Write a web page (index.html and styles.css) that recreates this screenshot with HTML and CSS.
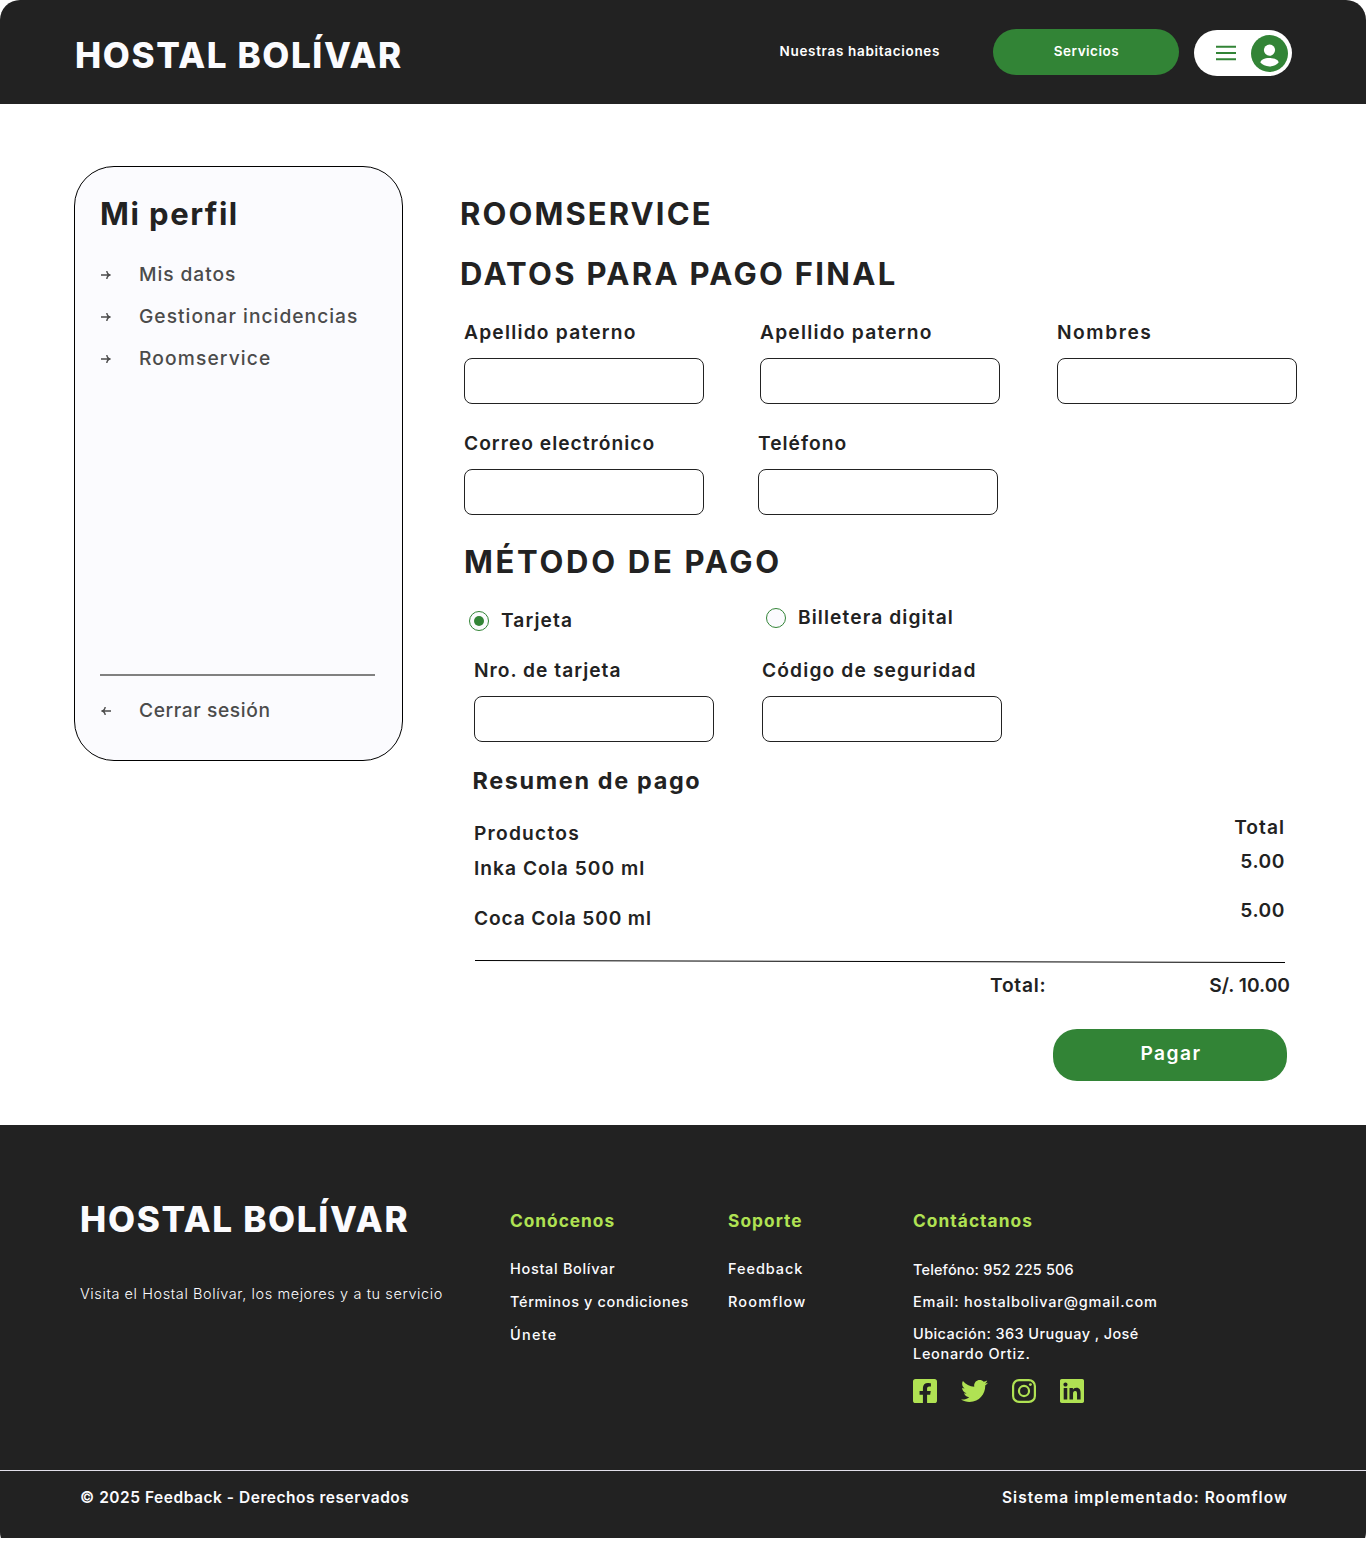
FILE: index.html
```html
<!DOCTYPE html>
<html lang="es">
<head>
<meta charset="utf-8">
<title>Hostal Bolívar - Roomservice</title>
<link rel="stylesheet" href="styles.css">
</head>
<body>
<div class="page">
  <header class="header">
    <div class="logo">HOSTAL BOLÍVAR</div>
    <nav class="nav">
      <a class="nav-link">Nuestras habitaciones</a>
      <a class="nav-button">Servicios</a>
      <div class="account">
        <svg class="menu-icon" width="20" height="16" viewBox="0 0 20 16"><path d="M0 1.7h20M0 8h20M0 14.3h20" stroke="#328436" stroke-width="2"/></svg>
        <svg class="avatar" width="37" height="37" viewBox="0 0 37 37"><circle cx="18.5" cy="18.5" r="18.5" fill="#328436"/><circle cx="18.5" cy="15.1" r="5.6" fill="#fff"/><path d="M9.4 27.6c0-2.800 4-4.700 9.100-4.700s9.100 1.900 9.100 4.700c-2 2.400-5 3.800-9.100 3.800s-7.100-1.400-9.100-3.800z" fill="#fff"/></svg>
      </div>
    </nav>
  </header>

  <main class="main">
    <aside class="sidebar">
      <h2 class="sidebar-title">Mi perfil</h2>
      <ul class="menu">
        <li class="menu-item ls-94"><svg class="arrow" viewBox="0 0 10 10"><path d="M0 5h9M5.800 1c.2 2 1.400 3.700 3.700 4C7.200 5.300 6 7 5.800 9"/></svg>Mis datos</li>
        <li class="menu-item ls-102"><svg class="arrow" viewBox="0 0 10 10"><path d="M0 5h9M5.800 1c.2 2 1.400 3.700 3.700 4C7.200 5.300 6 7 5.800 9"/></svg>Gestionar incidencias</li>
        <li class="menu-item ls-118"><svg class="arrow" viewBox="0 0 10 10"><path d="M0 5h9M5.800 1c.2 2 1.400 3.700 3.700 4C7.200 5.300 6 7 5.800 9"/></svg>Roomservice</li>
      </ul>
      <div class="menu-item logout"><svg class="arrow" viewBox="0 0 10 10"><path d="M10 5H1M4.200 1C4 3 2.800 4.700.5 5c2.300.3 3.500 2 3.700 4"/></svg>Cerrar sesión</div>
    </aside>

    <section class="content">
      <h1 class="title">ROOMSERVICE</h1>
      <h2 class="title title-data">DATOS PARA PAGO FINAL</h2>
      <div class="fields fields-name">
        <label class="field ls-122">Apellido paterno<input class="input"></label>
        <label class="field ls-122">Apellido paterno<input class="input"></label>
        <label class="field ls-150">Nombres<input class="input"></label>
      </div>
      <div class="fields fields-contact">
        <label class="field ls-102">Correo electrónico<input class="input"></label>
        <label class="field ls-102">Teléfono<input class="input"></label>
      </div>
      <h2 class="title title-method">MÉTODO DE PAGO</h2>
      <div class="options">
        <label class="option option-card"><span class="radio radio-on"></span>Tarjeta</label>
        <label class="option"><span class="radio"></span>Billetera digital</label>
      </div>
      <div class="fields fields-card">
        <label class="field ls-102">Nro. de tarjeta<input class="input"></label>
        <label class="field ls-114">Código de seguridad<input class="input"></label>
      </div>
      <h3 class="summary-title">Resumen de pago</h3>
      <div class="summary">
        <div class="products">
          <div class="ls-122">Productos</div>
          <div class="ls-102">Inka Cola 500 ml</div>
          <div class="product-last">Coca Cola 500 ml</div>
        </div>
        <div class="prices">
          <div class="ls-102">Total</div>
          <div>5.00</div>
          <div class="price-last">5.00</div>
        </div>
      </div>
      <svg class="rule" width="810" height="5" viewBox="0 0 810 5"><path d="M0 1.500L810 3.500" stroke="#000"/></svg>
      <div class="total"><span class="total-label">Total:</span><span class="total-value">S/. 10.00</span></div>
      <button class="pay" type="button">Pagar</button>
    </section>
  </main>

  <footer class="footer">
    <div class="footer-top">
      <div class="brand">
        <div class="logo">HOSTAL BOLÍVAR</div>
        <p class="tagline">Visita el Hostal Bolívar, los mejores y a tu servicio</p>
      </div>
      <div class="footer-col">
        <h4 class="footer-title ls-93">Conócenos</h4>
        <a class="ls-68">Hostal Bolívar</a>
        <a class="ls-64">Términos y condiciones</a>
        <a class="ls-122">Únete</a>
      </div>
      <div class="footer-col">
        <h4 class="footer-title">Soporte</h4>
        <a class="ls-94">Feedback</a>
        <a class="ls-114">Roomflow</a>
      </div>
      <div class="footer-col contact">
        <h4 class="footer-title">Contáctanos</h4>
        <span class="ls-15">Telefóno: 952 225 506</span>
        <span class="ls-80">Email: hostalbolivar@gmail.com</span>
        <span><span class="ls-42">Ubicación: 363 Uruguay , José</span><br><span class="ls-68">Leonardo Ortiz.</span></span>
        <div class="social">
          <svg width="24" height="24" viewBox="0 32 448 448"><path d="M400 32H48A48 48 0 0 0 0 80v352a48 48 0 0 0 48 48h137.25V327.69h-63V256h63v-54.64c0-62.15 37-96.48 93.67-96.48 27.14 0 55.52 4.84 55.52 4.84v61h-31.27c-30.81 0-40.42 19.12-40.42 38.73V256h68.78l-11 71.69h-57.78V480H400a48 48 0 0 0 48-48V80a48 48 0 0 0-48-48z"/></svg>
          <svg width="27" height="24" viewBox="0 28 512 456"><path d="M459.37 151.716c.325 4.548.325 9.097.325 13.645 0 138.72-105.583 298.558-298.558 298.558-59.452 0-114.68-17.219-161.137-47.106 8.447.974 16.568 1.299 25.34 1.299 49.055 0 94.213-16.568 130.274-44.832-46.132-.975-84.792-31.188-98.112-72.772 6.498.974 12.995 1.624 19.818 1.624 9.421 0 18.843-1.300 27.614-3.573-48.081-9.747-84.143-51.980-84.143-102.985v-1.299c13.969 7.797 30.214 12.670 47.431 13.319-28.264-18.843-46.781-51.005-46.781-87.391 0-19.492 5.197-37.360 14.294-52.954 51.655 63.675 129.300 105.258 216.365 109.807-1.624-7.797-2.599-15.918-2.599-24.040 0-57.828 46.782-104.934 104.934-104.934 30.213 0 57.502 12.670 76.670 33.137 23.715-4.548 46.456-13.320 66.599-25.340-7.798 24.366-24.366 44.833-46.132 57.827 21.117-2.273 41.584-8.122 60.426-16.243-14.292 20.791-32.161 39.308-52.628 54.253z"/></svg>
          <svg width="24" height="24" viewBox="0 0 24 24"><rect x="1.100" y="1.100" width="21.800" height="21.800" rx="6" fill="none" stroke="#b0e253" stroke-width="2.200"/><circle cx="12" cy="12" r="5.050" fill="none" stroke="#b0e253" stroke-width="2.200"/><circle cx="18.400" cy="5.600" r="1.450"/></svg>
          <svg width="24" height="24" viewBox="0 32 448 448"><path d="M416 32H31.900C14.300 32 0 46.500 0 64.300v383.400C0 465.500 14.300 480 31.900 480H416c17.600 0 32-14.500 32-32.300V64.300c0-17.800-14.400-32.300-32-32.300zM135.400 416H69V202.200h66.500V416zm-33.200-243c-21.300 0-38.500-17.300-38.500-38.500S80.900 96 102.200 96c21.200 0 38.500 17.300 38.500 38.500 0 21.300-17.200 38.500-38.500 38.500zm282.100 243h-66.400V312c0-24.800-.5-56.700-34.500-56.700-34.600 0-39.900 27-39.900 54.900V416h-66.400V202.200h63.700v29.200h.9c8.900-16.800 30.600-34.500 62.900-34.500 67.200 0 79.700 44.300 79.700 101.900V416z"/></svg>
        </div>
      </div>
    </div>
    <div class="footer-bottom">
      <span class="copyright">© 2025 Feedback - Derechos reservados</span>
      <span class="credit">Sistema implementado: Roomflow</span>
    </div>
  </footer>
</div>
</body>
</html>
```
FILE: styles.css
```css
* { box-sizing: border-box; }
body { margin: 0; background: #fff; font-family: Inter, sans-serif; color: #222; }
h1, h2, h3, h4, p, ul { margin: 0; padding: 0; }
ul { list-style: none; }
svg { display: block; flex: none; }

.page { height: 1538px; overflow: hidden; }

/* Header */
.header { display: flex; justify-content: space-between; align-items: flex-start; height: 104px; padding: 0 74px 0 75px; background: #222; border-radius: 20px 20px 0 0; color: #fff; }
.logo { font-size: 35px; font-weight: 800; line-height: 44px; letter-spacing: 1.6px; color: #fbfbfe; white-space: nowrap; }
.header .logo { margin-top: 33px; }
.nav { display: flex; padding-top: 29px; font-size: 13.5px; font-weight: 600; line-height: 44px; }
.nav-link { width: 213.5px; letter-spacing: .68px; }
.nav-button { width: 186px; height: 46px; border-radius: 23px; background: #328436; text-align: center; text-indent: 1px; letter-spacing: .51px; }
.account { display: flex; align-items: center; gap: 14.5px; width: 98px; height: 46px; margin: 1px 0 0 15px; padding-left: 22px; border-radius: 23px; background: #fff; }

/* Main */
.main { display: flex; gap: 57px; height: 1021px; padding: 62px 66px 0 74px; }
.sidebar { display: flex; flex-direction: column; flex: none; width: 329px; height: 595px; padding: 27px 27px 36px 25px; border: 1px solid #000; border-radius: 40px; background: #fbfbfe; }
.sidebar-title { font-size: 31px; font-weight: 700; line-height: 40px; letter-spacing: 1.5px; }
.menu { display: flex; flex-direction: column; gap: 14px; margin-top: 26px; }
.menu-item { display: flex; align-items: center; gap: 28px; font-size: 19.2px; font-weight: 500; line-height: 28px; color: #4b4b4b; }
.arrow { width: 10px; height: 10px; margin: 2px 0 0 1px; fill: none; stroke: #4b4b4b; stroke-width: 1.4; }
.logout { margin-top: auto; padding-top: 20px; border-top: 2px solid #808080; letter-spacing: .61px; }
.content { display: flex; flex-direction: column; width: 840px; padding-top: 28px; font-size: 19.2px; font-weight: 600; line-height: 28px; }
.title { font-size: 31px; font-weight: 700; line-height: 40px; letter-spacing: 2.1px; }
.title-data { margin-top: 20px; letter-spacing: 2.3px; }
.title-method { margin: 27px 0 0 4px; letter-spacing: 2.7px; }
.fields { display: grid; }
.fields-name { grid-template-columns: 296px 297px 240px; margin: 24px 0 0 4px; }
.fields-contact { grid-template-columns: 294px 240px; margin: 25px 0 0 4px; }
.fields-card { grid-template-columns: 288px 240px; margin: 22px 0 0 14px; }
.field { display: flex; flex-direction: column; gap: 12px; }
.input { width: 240px; height: 46px; border: 1px solid #222; border-radius: 8px; background: #fff; }
.options { display: grid; grid-template-columns: 297px 240px; height: 31px; margin: 21px 0 0 9px; letter-spacing: 1.1px; }
.option { display: flex; align-items: center; gap: 12px; height: 28px; }
.option-card { margin-top: 3px; }
.radio { display: grid; place-items: center; width: 20px; height: 20px; margin-top: 2px; border: 1px solid #328436; border-radius: 50%; background: #fbfbfe; }
.radio-on::before { content: ""; width: 10px; height: 10px; border-radius: 50%; background: #328436; }
.summary-title { margin: 23px 0 0 12.5px; font-size: 23.4px; font-weight: 700; line-height: 32px; letter-spacing: 1.66px; }
.summary { display: flex; justify-content: space-between; margin: 16px 15px 0 14px; }
.products { padding-top: 6px; letter-spacing: .85px; }
.products > :nth-child(2) { margin-top: 7px; }
.products .product-last { margin-top: 22px; }
.prices { text-align: right; letter-spacing: .55px; }
.prices > :nth-child(2) { margin-top: 6px; }
.prices .price-last { margin-top: 21px; }
.rule { margin: 27px 0 0 15px; }
.total { display: flex; justify-content: space-between; width: 300px; margin: 7px 0 0 530px; }
.total-label { letter-spacing: .75px; }
.total-value { letter-spacing: 0; }
.pay { width: 234px; height: 52px; margin: 30px 0 0 593px; padding: 0 0 4px 2px; border: 0; border-radius: 24px; background: #328436; color: #fff; font: inherit; letter-spacing: 1.44px; }

/* Footer */
.footer { height: 427px; border-radius: 0 0 20px 20px; background: #222; color: #fbfbfe; font-size: 14.5px; font-weight: 500; line-height: 20px; }
.footer-top { display: grid; grid-template-columns: 430px 218px 185px 260px; height: 345px; padding: 72px 0 0 80px; }
.brand .logo { letter-spacing: 1.7px; }
.tagline { margin-top: 43px; font-weight: 300; letter-spacing: .59px; }
.footer-col { display: flex; flex-direction: column; gap: 13px; padding-top: 12px; }
.footer-title { margin-bottom: 13px; font-size: 17.3px; font-weight: 700; line-height: 24px; letter-spacing: 1.06px; color: #b0e253; }
.contact { gap: 12px; }
.contact .footer-title { margin-bottom: 15px; }
.social { display: flex; gap: 24px; margin-top: 3px; fill: #b0e253; }
.footer-bottom { display: flex; justify-content: space-between; padding: 17px 78px 0 80px; border-top: 1px solid #e2e0ea; font-size: 15.5px; font-weight: 600; }
.copyright { letter-spacing: .53px; }
.credit { letter-spacing: 1.04px; }

/* Tracking */
.ls-15 { letter-spacing: .15px; }
.ls-42 { letter-spacing: .42px; }
.ls-64 { letter-spacing: .64px; }
.ls-68 { letter-spacing: .68px; }
.ls-80 { letter-spacing: .8px; }
.footer-title.ls-93 { letter-spacing: .98px; }
.ls-94 { letter-spacing: .94px; }
.ls-102 { letter-spacing: 1.02px; }
.ls-114 { letter-spacing: 1.14px; }
.ls-118 { letter-spacing: 1.14px; }
.ls-122 { letter-spacing: 1.22px; }
.ls-150 { letter-spacing: 1.55px; }
```
